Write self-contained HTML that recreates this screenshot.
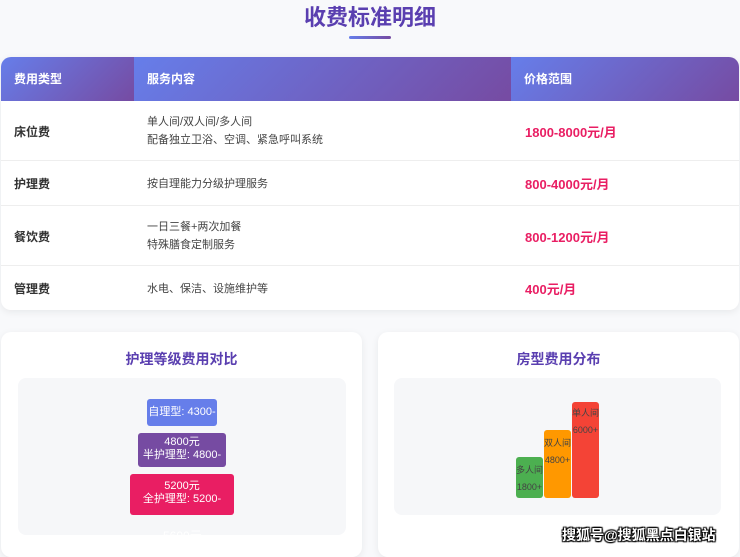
<!DOCTYPE html>
<html><head><meta charset="utf-8"><style>
*{margin:0;padding:0;box-sizing:border-box}
body{width:740px;height:552px;background:#f8f9fb;font-family:"Liberation Sans","Noto Sans CJK SC",sans-serif;position:relative;overflow:hidden}
.title{position:absolute;top:0px;left:0;width:740px;text-align:center;font-size:22px;font-weight:bold;color:#5a3fb0}
.ul{position:absolute;left:349px;top:36px;width:42px;height:3px;border-radius:2px;background:linear-gradient(90deg,#667eea,#764ba2)}
.card{position:absolute;background:#fff;border-radius:10px;box-shadow:0 2px 8px rgba(0,0,0,.07)}
.tbl{left:1px;top:57px;width:738px;height:253px;overflow:hidden}
.hd{position:absolute;top:0;height:44px;background:linear-gradient(135deg,#667eea,#764ba2);color:#fff;font-size:12px;font-weight:bold;line-height:44px;padding-left:13px}
.row{position:absolute;left:0;width:738px;border-bottom:1px solid #eee;font-size:11px;color:#444}
.row .a{position:absolute;left:13px;font-weight:bold;color:#333;font-size:12px}
.row .b{position:absolute;left:146px;line-height:18px}
.row .c{position:absolute;left:524px;font-weight:bold;color:#e91e63;font-size:13px}
.ct{position:absolute;width:100%;text-align:center;top:17px;font-size:14px;font-weight:bold;color:#5a3fb0}
.gb{position:absolute;background:#f6f7f9;border-radius:8px}
.lb{position:absolute;color:#fff;font-size:11px;text-align:center;border-radius:3px;line-height:13px;white-space:nowrap;overflow:hidden}
.bar{position:absolute;border-radius:3px;font-size:9px;color:#444;text-align:center}
.wm{position:absolute;left:562px;top:525px;font-size:14px;font-weight:bold;color:#fff;text-shadow:0 0 2px #000,1px 1px 1px #000,-1px -1px 1px #000,1px -1px 1px #000,-1px 1px 1px #000}
</style></head><body>
<div class="title">收费标准明细</div>
<div class="ul"></div>
<div class="card tbl">
<div class="hd" style="left:0;width:133px">费用类型</div>
<div class="hd" style="left:133px;width:377px">服务内容</div>
<div class="hd" style="left:510px;width:228px">价格范围</div>
<div class="row" style="top:44px;height:60px"><span class="a" style="top:22px">床位费</span><span class="b" style="top:12px">单人间/双人间/多人间<br>配备独立卫浴、空调、紧急呼叫系统</span><span class="c" style="top:21px">1800-8000元/月</span></div>
<div class="row" style="top:104px;height:45px"><span class="a" style="top:14px">护理费</span><span class="b" style="top:14px">按自理能力分级护理服务</span><span class="c" style="top:13px">800-4000元/月</span></div>
<div class="row" style="top:149px;height:60px"><span class="a" style="top:22px">餐饮费</span><span class="b" style="top:12px">一日三餐+两次加餐<br>特殊膳食定制服务</span><span class="c" style="top:21px">800-1200元/月</span></div>
<div class="row" style="top:209px;height:44px;border:none"><span class="a" style="top:14px">管理费</span><span class="b" style="top:14px">水电、保洁、设施维护等</span><span class="c" style="top:13px">400元/月</span></div>
</div>
<div class="card" style="left:1px;top:332px;width:361px;height:225px">
<div class="ct">护理等级费用对比</div>
<div class="gb" style="left:17px;top:46px;width:328px;height:157px"></div>
<div class="lb" style="left:146px;top:67px;width:70px;height:27px;line-height:27px;background:#667eea">自理型: 4300-</div>
<div class="lb" style="left:137px;top:101px;width:88px;height:34px;padding-top:3px;background:#764ba2">4800元<br>半护理型: 4800-</div>
<div class="lb" style="left:129px;top:142px;width:104px;height:41px;padding-top:6px;background:#e91e63">5200元<br>全护理型: 5200-</div>
<div style="position:absolute;left:162px;top:195px;color:#fff;font-size:12px">5600元</div>
</div>
<div class="card" style="left:378px;top:332px;width:361px;height:225px">
<div class="ct">房型费用分布</div>
<div class="gb" style="left:16px;top:46px;width:327px;height:137px"></div>
<div class="bar" style="left:138px;top:125px;width:27px;height:41px;background:#4caf50;padding-top:5px;line-height:17px">多人间<br>1800+</div>
<div class="bar" style="left:166px;top:98px;width:27px;height:68px;background:#ff9800;padding-top:5px;line-height:17px">双人间<br>4800+</div>
<div class="bar" style="left:194px;top:70px;width:27px;height:96px;background:#f44336;padding-top:3px;line-height:17px">单人间<br>6000+</div>
</div>
<div class="wm">搜狐号@搜狐黑点白银站</div>
</body></html>
